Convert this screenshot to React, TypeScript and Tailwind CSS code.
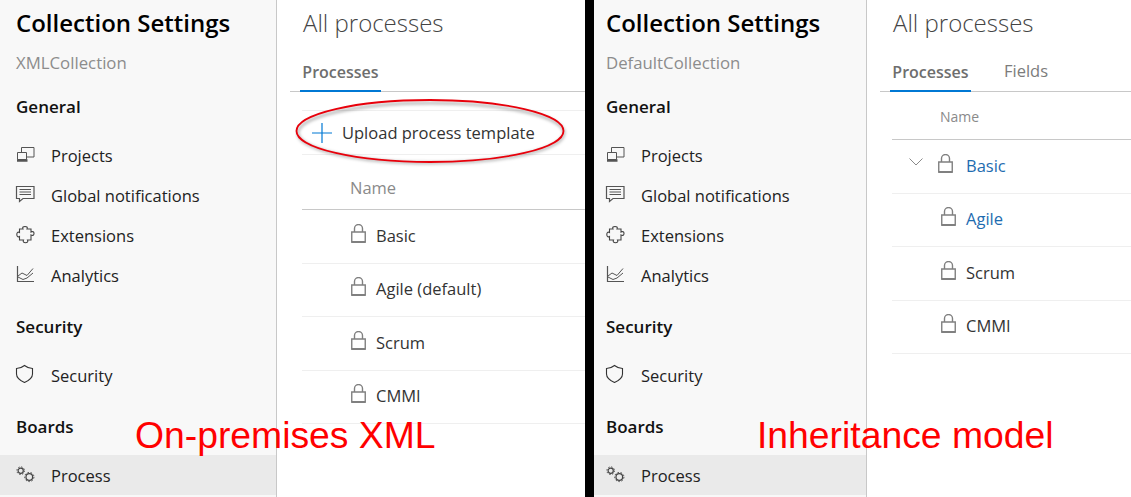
const FONT = "font-['Open_Sans','Noto_Sans',sans-serif]";

const icons: Record<string, JSX.Element> = {
  projects: (
    <g fill="none" stroke="#555" strokeWidth="1">
      <path d="M5.500 6V1.500h12.500v9.500h-7" />
      <path d="M1.500 6.500h9v7h-9z" fill="#f8f8f8" />
      <path d="M1 14.500h10.500" strokeWidth="2.500" />
    </g>
  ),
  notifications: (
    <g fill="none" stroke="#555" strokeWidth="1">
      <path d="M.5.500h17.500v12H7l-3.500 3v-3H.5z" strokeWidth="1.200" />
      <path d="M3.500 3.500h11.500M3.500 6h11.500M3.500 8.500h11.500" strokeWidth="1.200" />
    </g>
  ),
  extensions: (
    <path
      d="M7 3C6 1 7.500.5 9 .5S12 1 11 3h4v3c2-1 3 0 3 1.500S17 10 15 9v5h-3.500c1 2-.5 2.800-2 2.800s-3-.8-2-2.800h-4v-3.500c-2 1-2.700-.5-2.700-2s.7-3 2.700-2V3z"
      fill="none"
      stroke="#444"
      strokeWidth="1.100"
    />
  ),
  analytics: (
    <g fill="none" stroke="#555" strokeWidth="1">
      <path d="M1.500 0v15.500H18" strokeWidth="1.200" />
      <path d="M2 10l4-3 5 2.500 6-7" />
      <path d="M2 11l5 2.500 4-1.500 6-5" />
    </g>
  ),
  security: (
    <path
      d="M8.500-.5c2.500 2 5 3 8 3V8c0 4-3.500 6.500-8 8.500C4 14.500.5 12 .5 8V2.500c3 0 5.500-1 8-3z"
      fill="none"
      stroke="#333"
      strokeWidth="1.100"
    />
  ),
  process: (
    <g fill="none" stroke="#444">
      <circle cx="4.700" cy="4.700" r="2.600" strokeWidth="1.200" />
      <circle cx="4.700" cy="4.700" r="3.800" strokeWidth="1" strokeDasharray="1.400 1.580" />
      <circle cx="13.300" cy="11" r="3.300" strokeWidth="1.200" />
      <circle cx="13.300" cy="11" r="4.600" strokeWidth="1" strokeDasharray="1.600 1.610" />
    </g>
  ),
};

const Lock = () => (
  <svg width="15" height="19" viewBox="0 0 15 19" className="mb-[6px] shrink-0" fill="none" stroke="#808080">
    <path d="M.75 8h13.500v10H.75z" strokeWidth="1.400" />
    <path d="M.5 18h14" strokeWidth="2" />
    <path d="M3.500 8V4.500a4 4 0 0 1 8 0V8" strokeWidth="1.400" />
  </svg>
);

const NavRow = ({ icon, label, active, pad }: { icon: string; label: string; active?: boolean; pad: string }) => (
  <div className={`flex h-10 items-center text-[16.500px] text-[#222] ${pad} ${active ? "bg-[#eaeaea]" : ""}`}>
    <svg width="19" height="18" viewBox="0 0 19 18" className="mr-4 shrink-0 overflow-visible">
      {icons[icon]}
    </svg>
    <span className="pt-[2px]">{label}</span>
  </div>
);

const SectionHead = ({ label, pad }: { label: string; pad: string }) => (
  <div className={`mb-2 flex h-10 items-center text-[17px] font-semibold text-[#111] ${pad}`}>{label}</div>
);

const Sidebar = ({ collection, className, pad }: { collection: string; className: string; pad: string }) => (
  <div className={`shrink-0 border-r border-[#c8c8c8] bg-[#f8f8f8] ${className}`}>
    <div className={`flex h-12 items-center pb-[2px] text-[24px] font-semibold text-black ${pad}`}>Collection Settings</div>
    <div className={`mb-[9px] flex h-[30px] items-center text-[16.800px] text-[#8c8c8c] ${pad}`}>{collection}</div>
    <SectionHead label="General" pad={pad} />
    <NavRow icon="projects" label="Projects" pad={pad} />
    <NavRow icon="notifications" label="Global notifications" pad={pad} />
    <NavRow icon="extensions" label="Extensions" pad={pad} />
    <NavRow icon="analytics" label="Analytics" pad={pad} />
    <div className="mt-3">
      <SectionHead label="Security" pad={pad} />
      <NavRow icon="security" label="Security" pad={pad} />
    </div>
    <div className="mt-3">
      <SectionHead label="Boards" pad={pad} />
      <NavRow icon="process" label="Process" active pad={pad} />
    </div>
  </div>
);

const Tabs = ({ fields }: { fields?: boolean }) => (
  <div className="flex h-[44px] items-end gap-[33px] border-b border-[#c8c8c8] pl-[10px]">
    <div className="-mb-px flex h-[36px] w-[81px] items-start justify-center border-b-2 border-[#0078d4] pt-[4px] text-[16px] font-semibold text-[#6e6e6e]">
      Processes
    </div>
    {fields && <div className="flex h-[36px] items-start pt-[4px] text-[16.500px] text-[#7c7c7c]">Fields</div>}
  </div>
);

const Row = ({ name, link, chevron }: { name: string; link?: boolean; chevron?: boolean }) => (
  <div className="flex h-[53.500px] items-center border-b border-[#efefef]">
    <div className={`flex justify-end ${chevron ? "w-[46px] pr-[15px]" : "w-[49px]"}`}>
      {chevron && (
        <svg width="14" height="8" viewBox="0 0 14 8" fill="none" stroke="#8a8a8a" className="mb-[9px]">
          <path d="M.5.5L7 7 13.500.5" />
        </svg>
      )}
    </div>
    <Lock />
    <span className={`text-[16.500px] ${chevron ? "ml-[13px]" : "ml-[10px]"} ${link ? "text-[#1e6cb0]" : "text-[#333]"}`}>{name}</span>
  </div>
);

export default function App() {
  return (
    <div className={`flex h-[497px] w-[1131px] overflow-hidden bg-white ${FONT} relative`}>
      {/* left half */}
      <div className="flex w-[585px] shrink-0">
        <Sidebar collection="XMLCollection" className="w-[277px]" pad="pl-4" />
        <div className="min-w-0 flex-1 pl-[13px]">
          <div className="flex h-12 items-center pb-[2px] pl-[13px] text-[24px] font-light text-[#444]">All processes</div>
          <Tabs />
          <div className="ml-[12px]">
            <div className="mt-[18px] flex h-[45px] items-center border-y border-[#efefef] pl-[10px] text-[16.500px] text-[#333]">
              <svg width="20" height="20" viewBox="0 0 20 20" className="mr-[10px] shrink-0" stroke="#0078d4" strokeWidth="1.200">
                <path d="M10 0v20M0 10h20" />
              </svg>
              <span className="pt-[2px]">Upload process template</span>
            </div>
            <div className="flex h-[55px] items-center border-b border-[#c8c8c8] pl-[48px] pt-3 text-[16.500px] text-[#8a8a8a]">Name</div>
            <Row name="Basic" />
            <Row name="Agile (default)" />
            <Row name="Scrum" />
            <Row name="CMMI" />
          </div>
        </div>
      </div>

      <div className="w-[9px] shrink-0 bg-black" />

      {/* right half */}
      <div className="flex min-w-0 flex-1">
        <Sidebar collection="DefaultCollection" className="w-[273px]" pad="pl-3" />
        <div className="min-w-0 flex-1 pl-[13px]">
          <div className="flex h-12 items-center pb-[2px] pl-[13px] text-[24px] font-light text-[#444]">All processes</div>
          <Tabs fields />
          <div className="ml-[12px]">
            <div className="flex h-[48px] items-center border-b border-[#c8c8c8] pl-[48px] pt-[2px] text-[14px] text-[#8a8a8a]">Name</div>
            <Row name="Basic" link chevron />
            <Row name="Agile" link />
            <Row name="Scrum" />
            <Row name="CMMI" />
          </div>
        </div>
      </div>

      {/* annotations drawn over the screenshots */}
      <svg width="276" height="72" viewBox="0 0 276 72" className="absolute left-[295px] top-[97px]" fill="none">
        <ellipse cx="136" cy="36" rx="133" ry="30" stroke="#000" strokeOpacity="0.25" strokeWidth="3" className="blur-[1.500px]" />
        <ellipse cx="135" cy="34" rx="133.500" ry="31" stroke="#e8000b" strokeWidth="1.800" />
      </svg>
      <div className="absolute left-[135px] top-[413px] font-['Liberation_Sans',sans-serif] text-[37.300px] leading-[44px] text-[#ff0000]">On-premises XML</div>
      <div className="absolute left-[757px] top-[413px] font-['Liberation_Sans',sans-serif] text-[37.300px] leading-[44px] text-[#ff0000]">Inheritance model</div>
    </div>
  );
}
